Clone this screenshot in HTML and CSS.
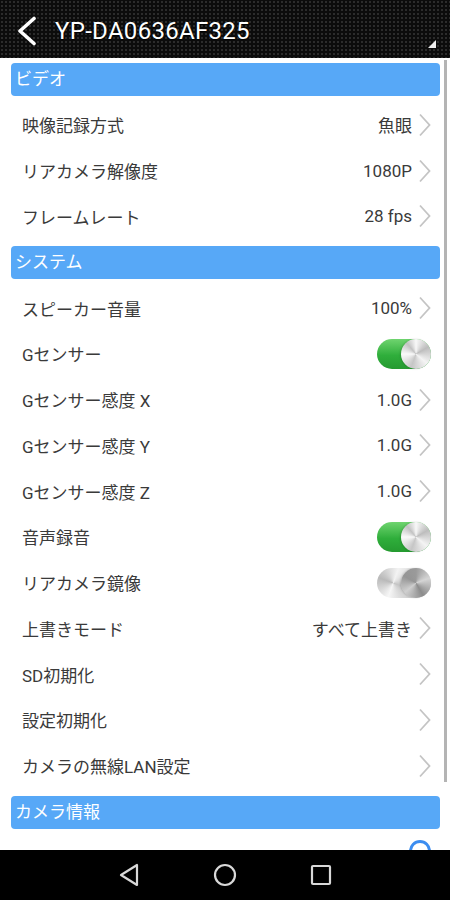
FILE: index.html
```html
<!DOCTYPE html>
<html lang="ja">

<head>
    <meta charset="UTF-8">
    <title>YP-DA0636AF325</title>
    <link rel="stylesheet" href="styles.css">
</head>

<body>
    <div class="screen">
        <div class="topbar">
            <svg class="back" width="24" height="30" viewBox="0 0 24 30">
                <polyline points="19,2.5 5,15 19,27.5" fill="none" stroke="#fff" stroke-width="3.6" stroke-linecap="round" stroke-linejoin="round" />
            </svg>
            <span class="title">YP-DA0636AF325</span>
            <span class="corner"></span>
        </div>

        <div class="content">
            <div class="scroll-thumb"></div>

            <div class="section first">ビデオ</div>
            <div class="row"><span class="label">映像記録方式</span><span class="value">魚眼</span><i class="chev"></i></div>
            <div class="row"><span class="label">リアカメラ解像度</span><span class="value">1080P</span><i class="chev"></i></div>
            <div class="row"><span class="label">フレームレート</span><span class="value">28 fps</span><i class="chev"></i></div>

            <div class="section">システム</div>
            <div class="row"><span class="label">スピーカー音量</span><span class="value">100%</span><i class="chev"></i></div>
            <div class="row"><span class="label">Gセンサー</span><span class="switch on"><span class="knob"></span></span></div>
            <div class="row"><span class="label">Gセンサー感度 X</span><span class="value">1.0G</span><i class="chev"></i></div>
            <div class="row"><span class="label">Gセンサー感度 Y</span><span class="value">1.0G</span><i class="chev"></i></div>
            <div class="row"><span class="label">Gセンサー感度 Z</span><span class="value">1.0G</span><i class="chev"></i></div>
            <div class="row"><span class="label">音声録音</span><span class="switch on"><span class="knob"></span></span></div>
            <div class="row"><span class="label">リアカメラ鏡像</span><span class="switch off"><span class="knob"></span></span></div>
            <div class="row"><span class="label">上書きモード</span><span class="value">すべて上書き</span><i class="chev"></i></div>
            <div class="row"><span class="label">SD初期化</span><i class="chev"></i></div>
            <div class="row"><span class="label">設定初期化</span><i class="chev"></i></div>
            <div class="row"><span class="label">カメラの無線LAN設定</span><i class="chev"></i></div>

            <div class="section">カメラ情報</div>
            <div class="row"><span class="label">SDカード残容量</span><span class="dot"></span></div>
        </div>

        <div class="navbar">
            <svg width="22" height="26" viewBox="0 0 22 26">
                <polygon points="19,3 19,23 3,13" fill="none" stroke="#d8d8d8" stroke-width="2.2" stroke-linejoin="round" />
            </svg>
            <svg width="24" height="24" viewBox="0 0 24 24">
                <circle cx="12" cy="12" r="10" fill="none" stroke="#d8d8d8" stroke-width="2.2" />
            </svg>
            <svg width="22" height="22" viewBox="0 0 22 22">
                <rect x="2" y="2" width="18" height="18" rx="1" fill="none" stroke="#d8d8d8" stroke-width="2.2" />
            </svg>
        </div>
    </div>
</body>

</html>
```

FILE: styles.css
```css
* {
    margin: 0;
    padding: 0;
    box-sizing: border-box;
}

body {
    width: 450px;
    height: 900px;
    overflow: hidden;
    background: #fff;
    font-family: Roboto, "Noto Sans CJK JP", sans-serif;
}

.screen {
    display: flex;
    flex-direction: column;
    height: 900px;
}

/* 上のバー */
.topbar {
    position: relative;
    height: 58px;
    flex: none;
    display: flex;
    align-items: center;
    padding-left: 15px;
    background-color: #0c0c0c;
    background-image: radial-gradient(circle, #2c2c2c 0.9px, transparent 1.2px);
    background-size: 4px 4px;
}

.back {
    margin-top: 3px;
}

.title {
    margin-left: 16px;
    margin-top: 3px;
    color: #fff;
    font-size: 24px;
    letter-spacing: 0.3px;
    text-shadow: 0 1px 1px #000;
}

.corner {
    position: absolute;
    right: 14px;
    bottom: 10px;
    width: 0;
    height: 0;
    border-left: 8px solid transparent;
    border-bottom: 8px solid #eee;
}

/* リスト */
.content {
    position: relative;
    flex: 1;
    overflow: hidden;
    padding: 0 10px 0 11px;
}

.scroll-thumb {
    position: absolute;
    right: 3px;
    top: 2px;
    width: 3px;
    height: 722px;
    background: #b4b4b4;
}

.section {
    height: 33px;
    margin: 7px 0 6px;
    padding-left: 4px;
    border-radius: 4px;
    background: #57a8f7;
    color: #fff;
    font-size: 17px;
    line-height: 33px;
}

.section.first {
    margin-top: 5px;
}

.row {
    display: flex;
    align-items: center;
    height: 45.75px;
    padding: 0 9px 0 11px;
    color: #3a3a3a;
    font-size: 17px;
}

.label {
    margin-right: auto;
}

.chev {
    width: 13px;
    height: 24px;
    margin-left: 6px;
    background: url("data:image/svg+xml;utf8,<svg xmlns='http://www.w3.org/2000/svg' width='13' height='24' viewBox='0 0 13 24'><polyline points='2,1.5 11.5,12 2,22.5' fill='none' stroke='%23c4c4c4' stroke-width='1.8'/></svg>") no-repeat center;
}

/* スイッチ */
.switch {
    display: flex;
    justify-content: flex-end;
    width: 54px;
    height: 30px;
    border-radius: 15px;
}

.switch.on {
    background: linear-gradient(180deg, #6fd46f, #2fae3b 55%, #259a30);
}

.switch.off {
    background: conic-gradient(from 200deg at 30% 50%, #f6f6f6, #b9b9b9, #f3f3f3, #c4c4c4, #f6f6f6);
}

.knob {
    width: 30px;
    height: 30px;
    border-radius: 50%;
    background: conic-gradient(#f8f8f8, #bdbdbd 60deg, #f4f4f4 130deg, #c6c6c6 200deg, #fafafa 270deg, #c2c2c2 320deg, #f8f8f8);
    box-shadow: -1px 0 2px rgba(0, 0, 0, 0.15);
}

.switch.off .knob {
    background: conic-gradient(#9a9a9a, #d5d5d5 70deg, #8c8c8c 150deg, #cfcfcf 230deg, #959595 300deg, #9a9a9a);
}

.dot {
    width: 22px;
    height: 22px;
    margin-top: -12px;
    border: 3px solid #3c8df0;
    border-radius: 50%;
}

/* ナビゲーション */
.navbar {
    height: 50px;
    flex: none;
    display: flex;
    align-items: center;
    justify-content: center;
    gap: 73px;
    background: #000;
}
```
